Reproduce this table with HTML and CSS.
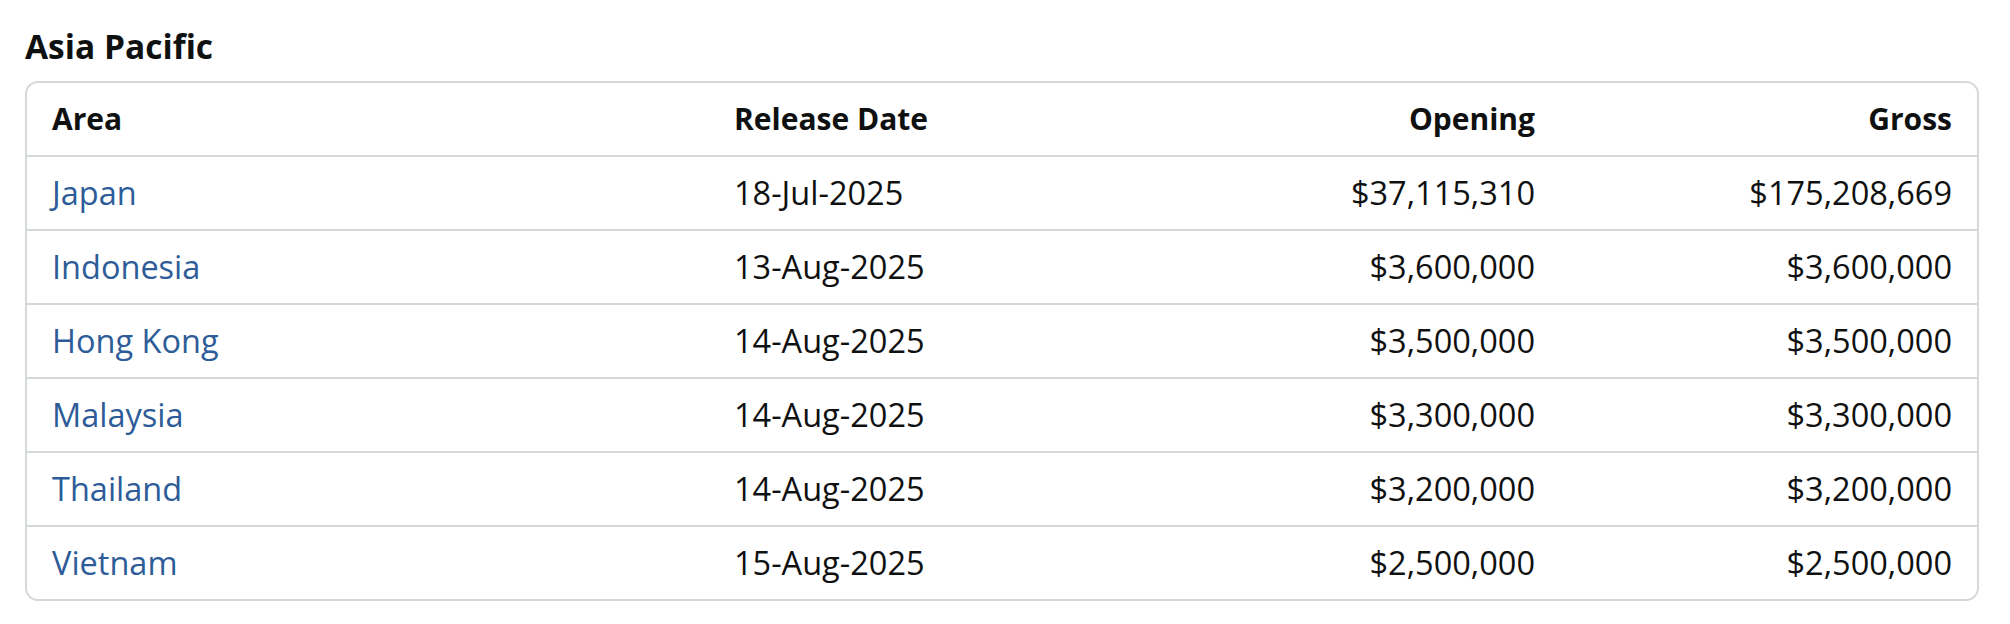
FILE: index.html
```html
<!DOCTYPE html>
<html lang="en">
<head>
<meta charset="utf-8">
<title>Asia Pacific</title>
<link rel="stylesheet" href="styles.css">
</head>
<body>
<section class="region">
  <h2 class="region-title">Asia Pacific</h2>
  <div class="card">
    <table class="grid">
      <colgroup>
        <col class="c-area">
        <col class="c-date">
        <col class="c-open">
        <col class="c-gross">
      </colgroup>
      <thead>
        <tr>
          <th class="left">Area</th>
          <th class="left">Release Date</th>
          <th class="right">Opening</th>
          <th class="right">Gross</th>
        </tr>
      </thead>
      <tbody>
        <tr><td><a href="#">Japan</a></td><td>18-Jul-2025</td><td class="right">$37,115,310</td><td class="right">$175,208,669</td></tr>
        <tr><td><a href="#">Indonesia</a></td><td>13-Aug-2025</td><td class="right">$3,600,000</td><td class="right">$3,600,000</td></tr>
        <tr><td><a href="#">Hong Kong</a></td><td>14-Aug-2025</td><td class="right">$3,500,000</td><td class="right">$3,500,000</td></tr>
        <tr><td><a href="#">Malaysia</a></td><td>14-Aug-2025</td><td class="right">$3,300,000</td><td class="right">$3,300,000</td></tr>
        <tr><td><a href="#">Thailand</a></td><td>14-Aug-2025</td><td class="right">$3,200,000</td><td class="right">$3,200,000</td></tr>
        <tr><td><a href="#">Vietnam</a></td><td>15-Aug-2025</td><td class="right">$2,500,000</td><td class="right">$2,500,000</td></tr>
      </tbody>
    </table>
  </div>
</section>
</body>
</html>
```
FILE: styles.css
```css
html, body {
  margin: 0;
  padding: 0;
  background: #ffffff;
}
body {
  font-family: "Open Sans", "Noto Sans", "Liberation Sans", sans-serif;
  color: #0f1111;
}
.region {
  padding: 26px 31px 0 25px;
}
.region-title {
  margin: 0 0 15px 0;
  font-size: 33.5px;
  line-height: 40px;
  font-weight: 700;
}
.card {
  border: 2px solid #d5d9d9;
  border-radius: 13px;
  overflow: hidden;
}
.grid {
  width: 100%;
  border-collapse: collapse;
  table-layout: fixed;
  font-size: 32.5px;
}
.c-area { width: 682px; }
.c-date { width: 425px; }
.c-open { width: 426px; }
.c-gross { width: auto; }
.grid th, .grid td {
  height: 72px;
  padding: 0 25px;
  line-height: 36px;
  vertical-align: middle;
  white-space: nowrap;
}
.grid th {
  font-weight: 700;
  font-size: 30px;
}
.grid tbody tr td {
  border-top: 2px solid #d5d9d9;
}
.left { text-align: left; }
.right { text-align: right; }
.grid a {
  color: #2d5c98;
  text-decoration: none;
}
```
